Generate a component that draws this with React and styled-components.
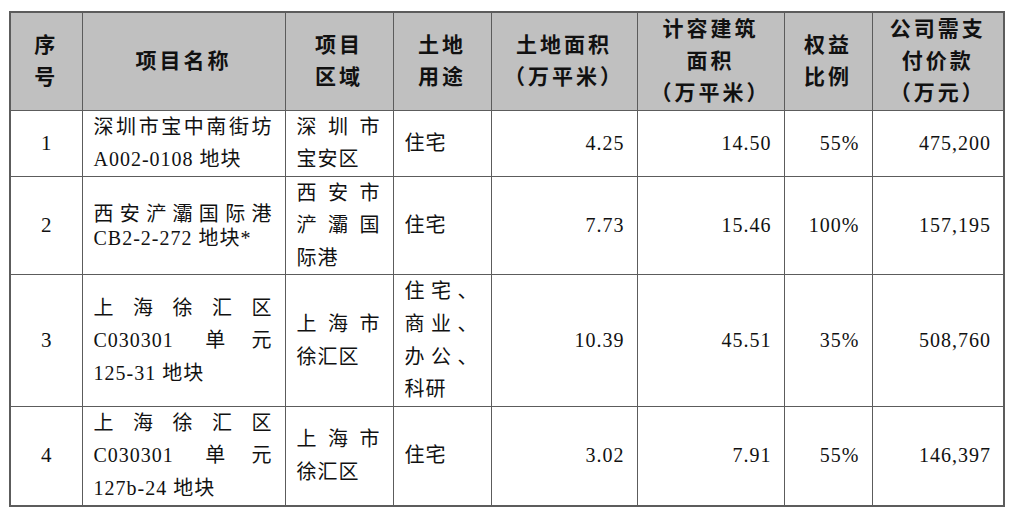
import React from 'react';
import styled, { createGlobalStyle } from 'styled-components';

const GlobalStyle = createGlobalStyle`
  html, body {
    margin: 0;
    padding: 0;
    background: #ffffff;
  }
  body {
    font-family: "Liberation Serif", "Noto Sans CJK SC", serif;
    color: #111111;
  }
`;

const columns = [72, 203, 108, 98, 146, 147, 88, 132];

const headers = [
  ['序', '号'],
  ['项目名称'],
  ['项目', '区域'],
  ['土地', '用途'],
  ['土地面积', '（万平米）'],
  ['计容建筑', '面积', '（万平米）'],
  ['权益', '比例'],
  ['公司需支', '付价款', '（万元）'],
];

const rows = [
  {
    h: 65,
    no: '1',
    name: ['深圳市宝中南街坊', 'A002-0108 地块'],
    area: ['深圳市', '宝安区'],
    use: ['住宅'],
    land: '4.25',
    build: '14.50',
    share: '55%',
    pay: '475,200',
  },
  {
    h: 98,
    no: '2',
    name: ['西安浐灞国际港', 'CB2-2-272 地块*'],
    tight: true,
    area: ['西安市', '浐灞国', '际港'],
    use: ['住宅'],
    land: '7.73',
    build: '15.46',
    share: '100%',
    pay: '157,195',
  },
  {
    h: 131,
    no: '3',
    name: ['上海徐汇区', 'C030301 单元', '125-31 地块'],
    area: ['上海市', '徐汇区'],
    use: ['住宅、', '商业、', '办公、', '科研'],
    land: '10.39',
    build: '45.51',
    share: '35%',
    pay: '508,760',
  },
  {
    h: 98,
    no: '4',
    name: ['上海徐汇区', 'C030301 单元', '127b-24 地块'],
    area: ['上海市', '徐汇区'],
    use: ['住宅'],
    land: '3.02',
    build: '7.91',
    share: '55%',
    pay: '146,397',
  },
];

const Page = styled.div`
  padding: 11px 0 0 9px;
`;

const Table = styled.table`
  width: 995px;
  table-layout: fixed;
  border-collapse: collapse;
  border: 2px solid #5c5c5c;
`;

const HeadRow = styled.tr`
  height: 98px;
  background: #c0c0c0;
`;

const Row = styled.tr`
  height: ${(p) => p.$h}px;
`;

const HeadCell = styled.th`
  border: 1.5px solid #5c5c5c;
  padding: 0 4px;
  font-size: 21px;
  font-weight: 700;
  line-height: 32px;
  letter-spacing: 3px;
  text-align: center;
  vertical-align: middle;
`;

const Cell = styled.td`
  border: 1.5px solid #5c5c5c;
  padding: ${(p) => (p.$align === 'center' ? '0' : '0 12px 0 11px')};
  font-size: 20px;
  line-height: ${(p) => (p.$tight ? '24px' : '32.6px')};
  letter-spacing: 1px;
  text-align: ${(p) => p.$align || 'left'};
  vertical-align: middle;
  white-space: nowrap;
`;

const NumberCell = styled(Cell)`
  font-size: 21px;
  letter-spacing: 0;
`;

const Line = styled.div`
  text-align: ${(p) => (p.$spread ? 'justify' : 'left')};
  text-align-last: ${(p) => (p.$spread ? 'justify' : 'left')};
`;

const HeadLine = styled.div`
  text-align: center;
`;

function Lines({ items }) {
  return items.map((text, i) => (
    <Line key={i} $spread={i < items.length - 1}>
      {text}
    </Line>
  ));
}

export default function App() {
  return (
    <Page>
      <GlobalStyle />
      <Table>
        <colgroup>
          {columns.map((w, i) => (
            <col key={i} style={{ width: w }} />
          ))}
        </colgroup>
        <thead>
          <HeadRow>
            {headers.map((lines, i) => (
              <HeadCell key={i}>
                {lines.map((l, j) => (
                  <HeadLine key={j}>{l}</HeadLine>
                ))}
              </HeadCell>
            ))}
          </HeadRow>
        </thead>
        <tbody>
          {rows.map((r) => (
            <Row key={r.no} $h={r.h}>
              <NumberCell $align="center">{r.no}</NumberCell>
              <Cell $tight={r.tight}>
                <Lines items={r.name} />
              </Cell>
              <Cell>
                <Lines items={r.area} />
              </Cell>
              <Cell>
                <Lines items={r.use} />
              </Cell>
              <Cell $align="right">{r.land}</Cell>
              <Cell $align="right">{r.build}</Cell>
              <Cell $align="right">{r.share}</Cell>
              <Cell $align="right">{r.pay}</Cell>
            </Row>
          ))}
        </tbody>
      </Table>
    </Page>
  );
}
